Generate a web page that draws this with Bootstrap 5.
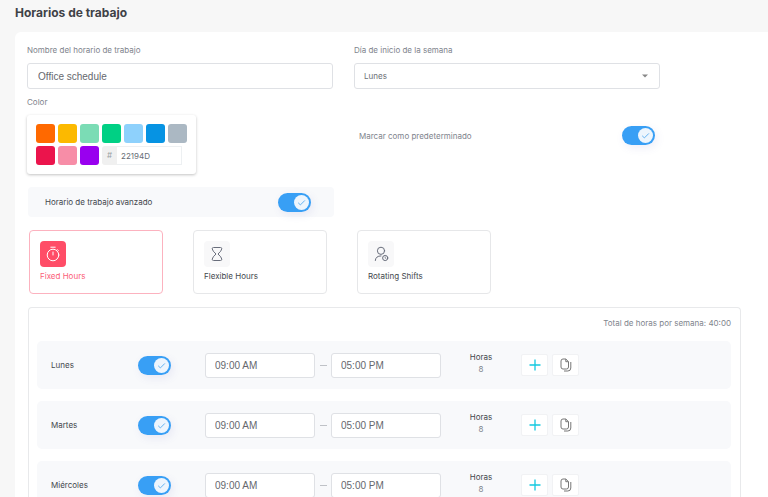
<!DOCTYPE html>
<html lang="es">
<head>
<meta charset="utf-8">
<meta name="viewport" content="width=device-width, initial-scale=1">
<title>Horarios de trabajo</title>
<link href="https://cdn.jsdelivr.net/npm/bootstrap@5.3.0/dist/css/bootstrap.min.css" rel="stylesheet">
<style>
  body { background: #f7f7f7; color: #43474d; font-family: Inter, "Liberation Sans", sans-serif; font-size: 8px; line-height: 12px; }
  .page-title { font-size: 12px; line-height: 16px; font-weight: 700; color: #3f4247; padding-top: 5px; margin-bottom: 11px; }
  .page-wrap { padding-left: 15px; }
  .panel { border-radius: 6px 0 0 0; padding: 12px 27px 0 12px; }
  .soft { color: #80848d; }
  .form-grid { display: grid; grid-template-columns: 1fr 1fr; column-gap: 21px; margin-right: 81px; }
  .form-grid label { display: block; }
  .field { font-size: 8px; line-height: 12px; height: 26px; border: 1px solid #dfe1e5; border-radius: 3px; padding: 0 9px; color: #6b6f76; background-color: #fff; }
  .field-text { font-family: "Liberation Sans", Arial, sans-serif; font-size: 10px; padding: 0 10px; color: #65686e; }
  .field-select { background-image: url("data:image/svg+xml,%3Csvg xmlns='http://www.w3.org/2000/svg' viewBox='0 0 6 4'%3E%3Cpath d='M0 .5h6L3 3.5z' fill='%23888'/%3E%3C/svg%3E"); background-size: 6px 4px; background-position: right 11px center; }
  .gap-label { margin-bottom: 7px; }
  .toggle { appearance: none; flex: none; width: 33px; height: 19px; margin: 0; border: 0; border-radius: 10px; background-color: #389ff5; box-shadow: 2px 3px 9px rgba(90, 90, 190, .1);
    background-image: url("data:image/svg+xml,%3Csvg xmlns='http://www.w3.org/2000/svg' viewBox='0 0 15 15'%3E%3Ccircle cx='7.5' cy='7.5' r='7.5' fill='%23edf5fd'/%3E%3Cpath d='M4.2 7.8l2.2 2.1 4.5-4.5' fill='none' stroke='%2365b3f2' stroke-width='1'/%3E%3C/svg%3E"); background-repeat: no-repeat; background-size: 15px 15px; background-position: right 2px center; }
  .toggle:not(:checked) { background-color: #c3c8d0; background-position: left 2px center; }
  .color-block { padding-top: 7px; }
  .palette { width: 169px; padding: 9px 8px 9px 9px; gap: 3px; border-radius: 3px; box-shadow: 0 1px 3px rgba(0, 0, 0, .24); }
  .swatch { width: 19px; height: 19px; border: 0; border-radius: 3px; padding: 0; }
  .hash { width: 15px; height: 19px; line-height: 18px; color: #98a1a4; background: #f0f0f0; border-radius: 3px 0 0 3px; }
  .hex { width: 65px; height: 19px; border: 1px solid #edf0f2; border-left: 0; padding: 0 4px; font-size: 8px; color: #666d76; }
  .c-orange { background: #ff6900; } .c-yellow { background: #fcb900; } .c-mint { background: #7bdcb5; } .c-green { background: #00d084; }
  .c-sky { background: #8ed1fc; } .c-blue { background: #0693e3; } .c-gray { background: #abb8c3; } .c-red { background: #eb144c; }
  .c-pink { background: #f78da7; } .c-purple { background: #9900ef; }
  .default-row { padding: 8px 5px 0; }
  .advanced { background: #f8f9fb; border-radius: 4px; height: 30px; padding: 0 23px 0 17px; margin: 13px -1px 0 1px; }
  .types { gap: 30px; margin: 13px 0 0 2px; }
  .type-btn { width: 134px; height: 64px; border: 1px solid #e6e7e9; border-radius: 4px; background: #fff; padding: 0 10px 2px; color: #43474d; line-height: 12px; }
  .type-btn.active { border-color: #fcb2bf; color: #fb6078; }
  .type-icon { width: 26px; height: 26px; border-radius: 4px; background: #f8f8f9; color: #686d7b; margin-bottom: 3px; }
  .type-btn.active .type-icon { background: #ff4d67; color: #fff; }
  .week { border: 1px solid #e8e9eb; border-bottom: 0; border-radius: 4px 4px 0 0; padding: 9px 9px 0 8px; margin: 13px 0 0 1px; }
  .days { gap: 12px; margin-top: 12px; }
  .day { display: grid; grid-template-columns: 87px 67px 110px 16px 110px 80px auto 1fr; align-items: center; height: 48px; padding-left: 14px; background: #f8f9fb; border-radius: 5px; }
  .day .field { height: 25px; padding: 0 9px; }
  .dash { width: 7px; height: 1px; background: #bfc2c7; justify-self: center; }
  .tool { width: 27px; height: 22px; border: 1px solid #f1f2f4; border-radius: 2px; background: #fff; padding: 0; }
  svg { display: block; fill: none; stroke: currentColor; }
</style>
<script src="https://cdn.jsdelivr.net/npm/bootstrap@5.3.0/dist/js/bootstrap.bundle.min.js"></script>
</head>
<body>
<div class="page-wrap vh-100 overflow-hidden d-flex flex-column">
  <h1 class="page-title">Horarios de trabajo</h1>
  <main class="panel bg-white flex-grow-1">
    <div class="form-grid">
      <div>
        <label class="soft gap-label" for="name">Nombre del horario de trabajo</label>
        <input class="form-control field field-text" id="name" type="text" value="Office schedule">
      </div>
      <div>
        <label class="soft gap-label" for="start">Día de inicio de la semana</label>
        <select class="form-select field field-select" id="start"><option>Lunes</option><option>Martes</option></select>
      </div>
      <div class="color-block">
        <label class="soft gap-label" for="hex">Color</label>
        <div class="palette bg-white d-flex flex-wrap">
          <button class="swatch c-orange" type="button" aria-label="Naranja"></button>
          <button class="swatch c-yellow" type="button" aria-label="Amarillo"></button>
          <button class="swatch c-mint" type="button" aria-label="Menta"></button>
          <button class="swatch c-green" type="button" aria-label="Verde"></button>
          <button class="swatch c-sky" type="button" aria-label="Celeste"></button>
          <button class="swatch c-blue" type="button" aria-label="Azul"></button>
          <button class="swatch c-gray" type="button" aria-label="Gris"></button>
          <button class="swatch c-red" type="button" aria-label="Rojo"></button>
          <button class="swatch c-pink" type="button" aria-label="Rosa"></button>
          <button class="swatch c-purple" type="button" aria-label="Morado"></button>
          <div class="d-flex"><span class="hash text-center">#</span><input class="hex" id="hex" type="text" value="22194D"></div>
        </div>
      </div>
      <div class="default-row d-flex align-items-center justify-content-between">
        <label class="soft" for="default">Marcar como predeterminado</label>
        <input class="toggle" id="default" type="checkbox" role="switch" checked>
      </div>
      <div class="advanced d-flex align-items-center justify-content-between">
        <label for="advanced">Horario de trabajo avanzado</label>
        <input class="toggle" id="advanced" type="checkbox" role="switch" checked>
      </div>
    </div>

    <div class="types d-flex">
      <button class="type-btn active d-flex flex-column justify-content-center align-items-start" type="button">
        <span class="type-icon d-flex align-items-center justify-content-center">
          <svg width="16" height="16" viewBox="0 0 16 16" stroke-linecap="round"><circle cx="8" cy="9" r="5.8"/><path d="M5.8 1.2h4.4M8 6v3M12.4 3.6l.9.9"/></svg>
        </span>Fixed Hours
      </button>
      <button class="type-btn d-flex flex-column justify-content-center align-items-start" type="button">
        <span class="type-icon d-flex align-items-center justify-content-center">
          <svg width="16" height="16" viewBox="0 0 16 16" stroke-linejoin="round"><path d="M4.500 1.500h7q1.300 0 1.300 1.300Q12.500 5 9 8q3.500 3 3.800 5.200 0 1.300-1.300 1.300h-7q-1.300 0-1.300-1.300Q3.500 11 7 8 3.500 5 3.200 2.800q0-1.300 1.300-1.300z"/></svg>
        </span>Flexible Hours
      </button>
      <button class="type-btn d-flex flex-column justify-content-center align-items-start" type="button">
        <span class="type-icon d-flex align-items-center justify-content-center">
          <svg width="16" height="16" viewBox="0 0 16 16" stroke-linecap="round"><circle cx="8" cy="4.800" r="3.600"/><path d="M2.300 14.500c.2-3 2.200-4.600 5.700-4.600"/><circle cx="12.200" cy="12" r="2.600"/><path d="M12.200 10.800v1.300l.8.500" stroke-width=".7"/></svg>
        </span>Rotating Shifts
      </button>
    </div>

    <section class="week">
      <div class="soft text-end">Total de horas por semana: 40:00</div>
      <div class="days d-flex flex-column">
        <div class="day">
          <label for="d1">Lunes</label>
          <input class="toggle" id="d1" type="checkbox" role="switch" checked>
          <input class="form-control field field-text" type="text" aria-label="Inicio lunes" value="09:00 AM">
          <span class="dash"></span>
          <input class="form-control field field-text" type="text" aria-label="Fin lunes" value="05:00 PM">
          <div class="text-center pb-1">Horas<div class="soft">8</div></div>
          <div class="d-flex gap-1">
            <button class="tool d-flex align-items-center justify-content-center" type="button" aria-label="Añadir"><svg width="12" height="12" viewBox="0 0 12 12"><path d="M6 .5v11M.5 6h11" stroke="#13c9e0" stroke-width="1.300"/></svg></button>
            <button class="tool d-flex align-items-center justify-content-center" type="button" aria-label="Copiar"><svg width="12" height="14" viewBox="0 0 12 14"><path d="M3 1h2.800l2.700 2.700v5.300q0 2-2 2H3Q1 11 1 9V3Q1 1 3 1zM5.800 1v2.700h2.700M10.800 4v6q0 3-3 3H4" stroke="#777"/></svg></button>
          </div>
        </div>
        <div class="day">
          <label for="d2">Martes</label>
          <input class="toggle" id="d2" type="checkbox" role="switch" checked>
          <input class="form-control field field-text" type="text" aria-label="Inicio martes" value="09:00 AM">
          <span class="dash"></span>
          <input class="form-control field field-text" type="text" aria-label="Fin martes" value="05:00 PM">
          <div class="text-center pb-1">Horas<div class="soft">8</div></div>
          <div class="d-flex gap-1">
            <button class="tool d-flex align-items-center justify-content-center" type="button" aria-label="Añadir"><svg width="12" height="12" viewBox="0 0 12 12"><path d="M6 .5v11M.5 6h11" stroke="#13c9e0" stroke-width="1.300"/></svg></button>
            <button class="tool d-flex align-items-center justify-content-center" type="button" aria-label="Copiar"><svg width="12" height="14" viewBox="0 0 12 14"><path d="M3 1h2.800l2.700 2.700v5.300q0 2-2 2H3Q1 11 1 9V3Q1 1 3 1zM5.800 1v2.700h2.700M10.800 4v6q0 3-3 3H4" stroke="#777"/></svg></button>
          </div>
        </div>
        <div class="day">
          <label for="d3">Miércoles</label>
          <input class="toggle" id="d3" type="checkbox" role="switch" checked>
          <input class="form-control field field-text" type="text" aria-label="Inicio miércoles" value="09:00 AM">
          <span class="dash"></span>
          <input class="form-control field field-text" type="text" aria-label="Fin miércoles" value="05:00 PM">
          <div class="text-center pb-1">Horas<div class="soft">8</div></div>
          <div class="d-flex gap-1">
            <button class="tool d-flex align-items-center justify-content-center" type="button" aria-label="Añadir"><svg width="12" height="12" viewBox="0 0 12 12"><path d="M6 .5v11M.5 6h11" stroke="#13c9e0" stroke-width="1.300"/></svg></button>
            <button class="tool d-flex align-items-center justify-content-center" type="button" aria-label="Copiar"><svg width="12" height="14" viewBox="0 0 12 14"><path d="M3 1h2.800l2.700 2.700v5.300q0 2-2 2H3Q1 11 1 9V3Q1 1 3 1zM5.800 1v2.700h2.700M10.800 4v6q0 3-3 3H4" stroke="#777"/></svg></button>
          </div>
        </div>
      </div>
    </section>
  </main>
</div>
</body>
</html>
